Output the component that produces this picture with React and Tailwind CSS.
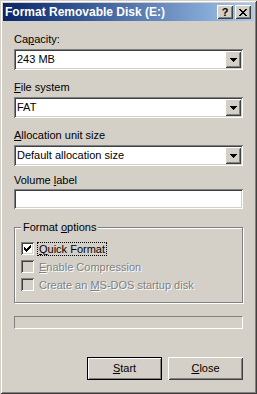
import React from "react";

// classic 3D borders
const raised = "shadow-[inset_1px_1px_#ffffff,inset_-1px_-1px_#404040,inset_2px_2px_#d4d0c8,inset_-2px_-2px_#808080]";
const sunken = "shadow-[inset_1px_1px_#808080,inset_-1px_-1px_#ffffff,inset_2px_2px_#404040,inset_-2px_-2px_#d4d0c8]";
const disabledText = "text-[#808080] [text-shadow:1px_1px_0_#ffffff]";

const Combo = ({ value }) => (
    <div className={`${sunken} h-[21px] bg-white flex items-center p-[2px]`}>
        <span className="flex-1 pl-[1px] leading-[13px]">{value}</span>
        <span className={`${raised} w-[16px] h-[17px] bg-[#d4d0c8] flex items-center justify-center`}>
            <svg width="7" height="4" viewBox="0 0 7 4" shapeRendering="crispEdges">
                <path d="M0 0h7v1H0zM1 1h5v1H1zM2 2h3v1H2zM3 3h1v1H3z" fill="#000" />
            </svg>
        </span>
    </div>
);

const Label = ({ before, hot, after, className = "" }) => (
    <div className={`h-[13px] leading-[13px] ${className}`}>
        {before}<u>{hot}</u>{after}
    </div>
);

const CheckBox = ({ checked, disabled }) => (
    <span className={`${sunken} w-[13px] h-[13px] shrink-0 flex items-center justify-center ${disabled ? 'bg-[#d4d0c8]' : 'bg-white'}`}>
        {checked && (
            <svg width="7" height="7" viewBox="0 0 7 7" shapeRendering="crispEdges">
                <path d="M0 2h1v3H0zM1 3h1v3H1zM2 4h1v3H2zM3 3h1v3H3zM4 2h1v3H4zM5 1h1v3H5zM6 0h1v3H6z" fill="#000" />
            </svg>
        )}
    </span>
);

const App = () => {
    const options = [
        { before: "", hot: "Q", after: "uick Format", checked: true, focus: true },
        { before: "", hot: "E", after: "nable Compression", disabled: true },
        { before: "Create an ", hot: "M", after: "S-DOS startup disk", disabled: true },
    ];

    return (
        <div className="w-[257px] h-[394px] bg-[#d4d0c8] p-[3px] flex flex-col text-[11px] text-black font-['Liberation_Sans',Arial,sans-serif] shadow-[inset_1px_1px_#d4d0c8,inset_-1px_-1px_#404040,inset_2px_2px_#ffffff,inset_-2px_-2px_#808080]">
            {/* title bar */}
            <div className="h-[18px] shrink-0 flex items-center pl-[2px] pr-[3px] bg-linear-to-r from-[#0a246a] to-[#a6caf0]">
                <span className="flex-1 text-white font-bold text-[12px] leading-[18px] whitespace-nowrap">Format Removable Disk (E:)</span>
                <div className="flex gap-[2px]">
                    <span className={`${raised} w-[16px] h-[14px] bg-[#d4d0c8] flex items-center justify-center font-bold text-[11px] leading-[14px]`}>?</span>
                    <span className={`${raised} w-[16px] h-[14px] bg-[#d4d0c8] flex items-center justify-center`}>
                        <svg width="8" height="7" viewBox="0 0 8 7" shapeRendering="crispEdges">
                            <path d="M0 0h2v1H0zM6 0h2v1H6zM1 1h2v1H1zM5 1h2v1H5zM2 2h4v1H2zM3 3h2v1H3zM2 4h4v1H2zM1 5h2v1H1zM5 5h2v1H5zM0 6h2v1H0zM6 6h2v1H6z" fill="#000" />
                        </svg>
                    </span>
                </div>
            </div>

            {/* body */}
            <div className="flex flex-col px-[11px] pt-[12px]">
                <Label before="Ca" hot="p" after="acity:" />
                <div className="mt-[3px]"><Combo value="243 MB" /></div>

                <Label className="mt-[11px]" hot="F" after="ile system" />
                <div className="mt-[3px]"><Combo value="FAT" /></div>

                <Label className="mt-[11px]" hot="A" after="llocation unit size" />
                <div className="mt-[3px]"><Combo value="Default allocation size" /></div>

                <Label className="mt-[8px]" before="Volume " hot="l" after="abel" />
                <div className={`${sunken} mt-[2px] h-[20px] bg-white`} />

                {/* format options group */}
                <div className="relative mt-[18px] h-[76px] border border-[#808080] shadow-[inset_1px_1px_#ffffff,1px_1px_#ffffff] pl-[6px] pt-[14px] flex flex-col gap-[5px]">
                    <span className="absolute left-[6px] top-[-7px] px-[2px] bg-[#d4d0c8] leading-[13px]">
                        Format <u>o</u>ptions
                    </span>
                    {options.map((opt, i) => (
                        <div key={i} className="h-[13px] flex items-center">
                            <CheckBox checked={opt.checked} disabled={opt.disabled} />
                            <span className={`ml-[3px] px-[1px] leading-[12px] border border-dotted ${opt.focus ? 'border-black' : 'border-transparent'} ${opt.disabled ? disabledText : ''}`}>
                                {opt.before}<u>{opt.hot}</u>{opt.after}
                            </span>
                        </div>
                    ))}
                </div>

                {/* progress bar */}
                <div className="mt-[13px] h-[13px] border border-[#808080] border-r-white border-b-white" />

                {/* buttons */}
                <div className="mt-[28px] flex justify-end gap-[6px]">
                    <button className="w-[75px] h-[23px] border border-black bg-[#d4d0c8] shadow-[inset_1px_1px_#ffffff,inset_-1px_-1px_#808080] leading-[13px]">
                        <u>S</u>tart
                    </button>
                    <button className={`${raised} w-[75px] h-[23px] bg-[#d4d0c8] leading-[13px]`}>
                        <u>C</u>lose
                    </button>
                </div>
            </div>
        </div>
    );
};

export default App;
